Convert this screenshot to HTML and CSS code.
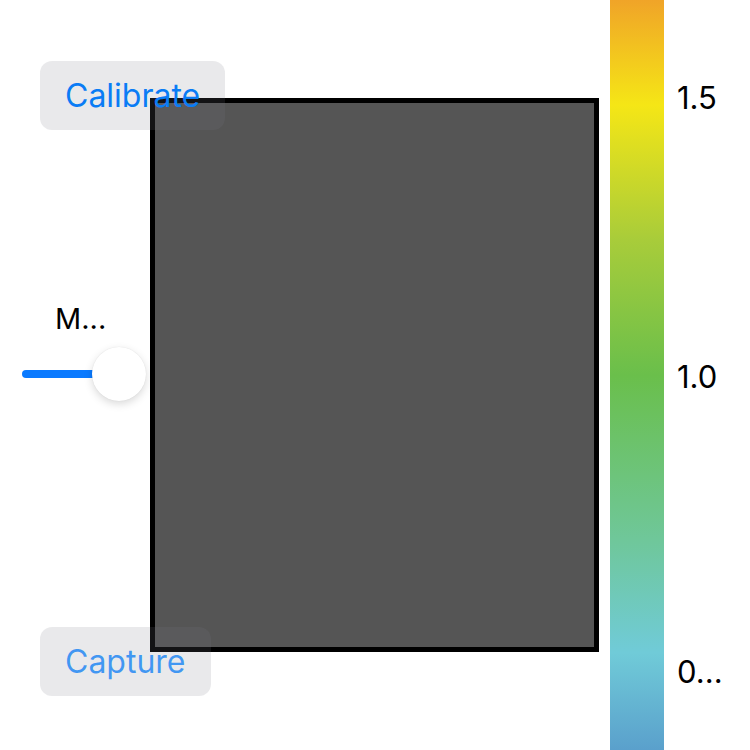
FILE: index.html
```html
<!DOCTYPE html>
<html lang="en">
<head>
  <meta charset="UTF-8" />
  <meta name="viewport" content="width=device-width, initial-scale=1.0" />
  <title>Depth Capture</title>
  <link rel="stylesheet" href="styles.css">
</head>
<body>

<div class="screen">
  <!-- left side controls, drawn over the preview -->
  <div class="controls">
    <button class="btn" id="calibrateBtn">Calibrate</button>

    <div class="slider-group">
      <div class="slider-label">M...</div>
      <div class="slider">
        <div class="slider-fill"></div>
        <div class="slider-thumb"></div>
      </div>
    </div>

    <button class="btn btn-dim" id="captureBtn">Capture</button>
  </div>

  <div class="preview"></div>

  <div class="colorbar"></div>

  <div class="scale">
    <span class="tick" style="top: 97px">1.5</span>
    <span class="tick" style="top: 376px">1.0</span>
    <span class="tick" style="top: 671px">0...</span>
  </div>
</div>

</body>
</html>
```

FILE: styles.css
```css
body {
  font-family: 'Inter', 'Liberation Sans', sans-serif;
  background-color: #fff;
  margin: 0;
  width: 750px;
  height: 750px;
  overflow: hidden;
}
.screen {
  display: flex;
  height: 750px;
}
.controls {
  width: 150px;
  flex-shrink: 0;
  display: flex;
  flex-direction: column;
  padding: 61px 0 0 22px;
  box-sizing: border-box;
  position: relative;
  z-index: 1;
}
.btn {
  align-self: flex-start;
  margin-left: 18px;
  height: 69px;
  padding: 0 25px;
  border: none;
  border-radius: 12px;
  background-color: rgba(120, 120, 128, 0.16);
  color: #0a7cf5;
  font-family: inherit;
  font-size: 32px;
  white-space: nowrap;
  cursor: pointer;
}
.btn-dim {
  color: rgba(10, 124, 245, 0.75);
  margin-top: 226px;
}
.slider-group {
  margin-top: 172px;
}
.slider-label {
  margin-left: 33px;
  font-size: 29px;
  line-height: 34px;
  color: #000;
}
.slider {
  position: relative;
  margin-top: 11px;
  width: 124px;
  height: 54px;
}
.slider-fill {
  position: absolute;
  left: 0;
  top: 23px;
  width: 80px;
  height: 8px;
  border-radius: 4px;
  background-color: #0a7aff;
}
.slider-thumb {
  position: absolute;
  left: 70px;
  top: 0;
  width: 54px;
  height: 54px;
  border-radius: 50%;
  background: #fff;
  box-shadow: 0 3px 8px rgba(0,0,0,0.15), 0 0 1px rgba(0,0,0,0.12);
}
.preview {
  flex-shrink: 0;
  width: 449px;
  height: 554px;
  margin-top: 98px;
  border: 5px solid #000;
  box-sizing: border-box;
  background-color: #555;
}
.colorbar {
  flex-shrink: 0;
  width: 54px;
  height: 750px;
  margin-left: 11px;
  background: linear-gradient(to bottom,
    #f0a428 0%,
    #f5e616 14%,
    #a8cc3a 32%,
    #6abf4b 50%,
    #6fc79a 72%,
    #70cbd8 87%,
    #5aa0cc 100%);
}
.scale {
  position: relative;
  flex: 1;
}
.tick {
  position: absolute;
  left: 13px;
  transform: translateY(-50%);
  font-size: 31px;
  color: #000;
}
```
